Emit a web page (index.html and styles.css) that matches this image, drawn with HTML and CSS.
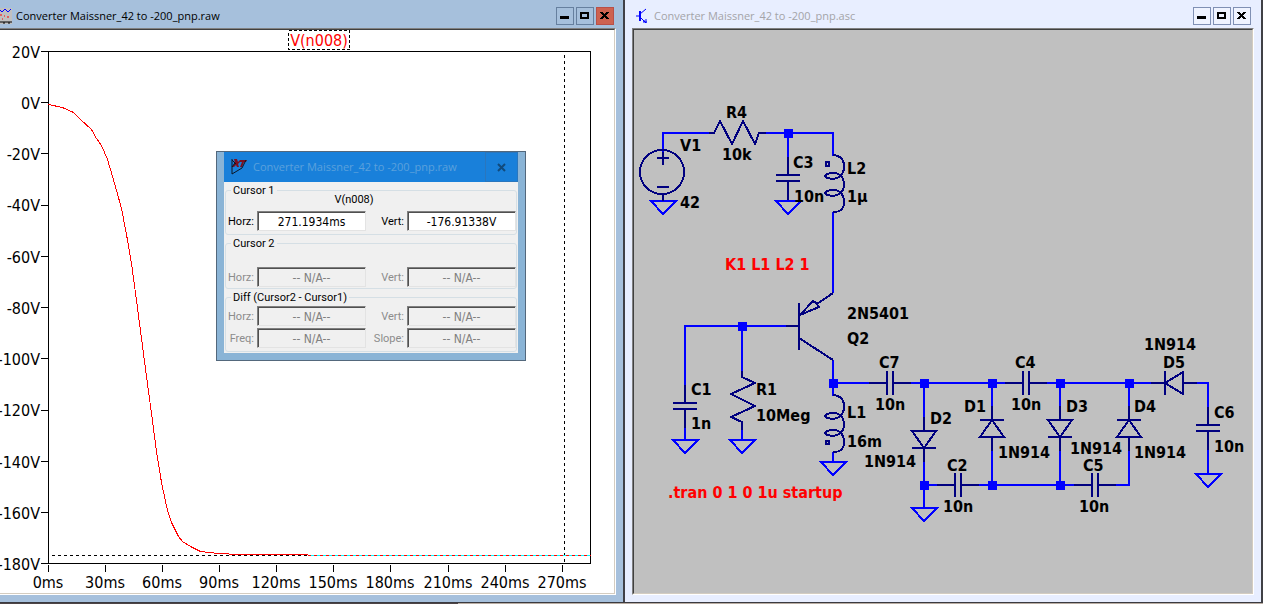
FILE: index.html
```html
<!DOCTYPE html>
<html lang="en">
<head>
<meta charset="utf-8">
<title>Converter Maissner_42 to -200_pnp</title>
<link rel="stylesheet" href="styles.css">
</head>
<body>
<main class="desktop">
  <section class="window window-plot">
    <header class="titlebar">
      <svg class="doc-icon" width="16" height="16" viewBox="0 0 16 16" aria-hidden="true">
        <rect width="16" height="16" fill="#c0c0c0"/>
        <path d="M0 4L3 1L6 4L9 1L12 4L15 1" fill="none" stroke="#00f"/>
        <path d="M1 9h1M4 7h2M8 8h1M11 9h2M6 11h1" stroke="#f00" stroke-width="1"/>
        <path d="M0 14h16M3 14v2M8 14v2M13 14v2" stroke="#000"/>
      </svg>
      <h1 class="title">Converter Maissner_42 to -200_pnp.raw</h1>
      <div class="buttons">
        <button class="win-btn" type="button" aria-label="Minimize"><svg width="16" height="16" viewBox="0 0 16 16"><path d="M3 8h9v3H3z"/></svg></button>
        <button class="win-btn" type="button" aria-label="Maximize"><svg width="16" height="16" viewBox="0 0 16 16"><path fill-rule="evenodd" d="M3 4h9v7H3zM5 6v3h5V6z"/></svg></button>
        <button class="win-btn win-btn-close" type="button" aria-label="Close"><svg width="16" height="16" viewBox="0 0 16 16"><path d="M3 4h3v1h1v1h1V5h1V4h3v1h-1v1h-1v1H9v1h1v1h1v1h1v1H9v-1H8V9H7v1H6v1H3v-1h1V9h1V8h1V7H5V6H4V5H3z"/></svg></button>
      </div>
    </header>
    <div class="client">
      <svg class="canvas plot" viewBox="0 30 614 563" preserveAspectRatio="xMinYMin meet">
        <g class="axis" transform="translate(.5 .5)">
          <rect x="48" y="51" width="542" height="512"/>
          <path d="M40 51h8M40 102h8M40 153h8M40 205h8M40 256h8M40 307h8M40 358h8M40 410h8M40 461h8M40 512h8M40 563h8M48 564v7M105 564v7M162 564v7M219 564v7M276 564v7M333 564v7M390 564v7M448 564v7M505 564v7M562 564v7"/>
        </g>
        <g class="ylabels">
          <text x="40" y="58">20V</text><text x="40" y="109">0V</text><text x="40" y="160">-20V</text>
          <text x="40" y="211">-40V</text><text x="40" y="263">-60V</text><text x="40" y="314">-80V</text>
          <text x="40" y="365">-100V</text><text x="40" y="416">-120V</text><text x="40" y="468">-140V</text>
          <text x="40" y="519">-160V</text><text x="40" y="570">-180V</text>
        </g>
        <g class="xlabels">
          <text x="48" y="588">0ms</text><text x="105" y="588">30ms</text><text x="162" y="588">60ms</text>
          <text x="219" y="588">90ms</text><text x="276" y="588">120ms</text><text x="333" y="588">150ms</text>
          <text x="390" y="588">180ms</text><text x="448" y="588">210ms</text><text x="505" y="588">240ms</text>
          <text x="562" y="588">270ms</text>
        </g>
        <g transform="translate(.5 .5)">
          <path class="cursor" d="M51 555H307M564 54V563"/>
          <path class="trace" d="M48 104L62 107L73 112L80 119L91 129L96 138L101 145L107 159L112 176L116 190L121 208L126 234L131 263L136 300L141 338L146 376L151 413L156 451L161 482L167 510L171 522L178 536L182 541L190 546L200 551L218 553L238 554H307"/>
          <path class="trace-alt" d="M307 555H590"/>
          <path class="trace trace-dash" d="M307 555H590"/>
          <rect class="legend-box" x="288" y="30" width="61" height="19"/>
        </g>
        <text class="trace-name" x="319" y="46">V(n008)</text>
      </svg>

      <div class="dialog" role="dialog" aria-label="Cursor values">
        <header class="dlg-bar">
          <svg class="dlg-icon" width="16" height="16" viewBox="0 0 16 16" aria-hidden="true">
            <path d="M3 0h3l1 3l2-2h7l-1 2h-2l-2 5h-2l2-5h-2l-2 2l1 3H6L5 6L3 8H1l3-4z" fill="#7d1020"/>
            <path d="M1 0V15L11 9L15 1M1 8L4 4M1 1L5 5" fill="none" stroke="#0c1624"/>
          </svg>
          <h2 class="dlg-title">Converter Maissner_42 to -200_pnp.raw</h2>
          <button class="dlg-close" type="button" aria-label="Close dialog"><svg width="9" height="9" viewBox="0 0 9 9"><path d="M1 1L8 8M8 1L1 8" stroke="#114a7c" stroke-width="2"/></svg></button>
        </header>
        <form class="dlg-body">
          <fieldset class="group">
            <legend>Cursor 1</legend>
            <div class="signal">V(n008)</div>
            <div class="fields">
              <label for="c1h">Horz:</label><input id="c1h" type="text" value="271.1934ms" readonly>
              <label for="c1v">Vert:</label><input id="c1v" type="text" value="-176.91338V" readonly>
            </div>
          </fieldset>
          <fieldset class="group group-second">
            <legend>Cursor 2</legend>
            <div class="fields">
              <label class="off" for="c2h">Horz:</label><input id="c2h" type="text" value="-- N/A--" disabled>
              <label class="off" for="c2v">Vert:</label><input id="c2v" type="text" value="-- N/A--" disabled>
            </div>
          </fieldset>
          <fieldset class="group group-diff">
            <legend>Diff (Cursor2 - Cursor1)</legend>
            <div class="fields">
              <label class="off" for="dh">Horz:</label><input id="dh" type="text" value="-- N/A--" disabled>
              <label class="off" for="dv">Vert:</label><input id="dv" type="text" value="-- N/A--" disabled>
              <label class="off" for="df">Freq:</label><input id="df" type="text" value="-- N/A--" disabled>
              <label class="off" for="ds">Slope:</label><input id="ds" type="text" value="-- N/A--" disabled>
            </div>
          </fieldset>
        </form>
      </div>
    </div>
  </section>

  <section class="window window-schematic">
    <header class="titlebar">
      <svg class="doc-icon" width="12" height="16" viewBox="0 0 12 16" aria-hidden="true">
        <path d="M0 8h4M4 6L10 1M4 9L10 15M10 11v4M7 14h4M8 12v2" fill="none" stroke="#00f"/><path d="M4 3v10" stroke="#00f" stroke-width="2"/>
      </svg>
      <h1 class="title">Converter Maissner_42 to -200_pnp.asc</h1>
      <div class="buttons">
        <button class="win-btn" type="button" aria-label="Minimize"><svg width="16" height="16" viewBox="0 0 16 16"><path d="M3 8h9v3H3z"/></svg></button>
        <button class="win-btn" type="button" aria-label="Maximize"><svg width="16" height="16" viewBox="0 0 16 16"><path fill-rule="evenodd" d="M3 4h9v7H3zM5 6v3h5V6z"/></svg></button>
        <button class="win-btn" type="button" aria-label="Close"><svg width="16" height="16" viewBox="0 0 16 16"><path d="M3 4h3v1h1v1h1V5h1V4h3v1h-1v1h-1v1H9v1h1v1h1v1h1v1H9v-1H8V9H7v1H6v1H3v-1h1V9h1V8h1V7H5V6H4V5H3z"/></svg></button>
      </div>
    </header>
    <div class="client">
      <svg class="canvas schematic" viewBox="634 30 618 563" preserveAspectRatio="xMinYMin meet">
        <defs>
          <path id="gnd" d="M-12 0H13L0 13Z"/>
          <path id="coil" d="M0 0C8 1 11 4 11 12C11 18 9 20 6 22C2 25 -6 24 -8 21C-5 17 3 17 7 20C10 22 11 25 11 30C11 34 9 37 6 39C2 42 -6 41 -8 38C-5 34 3 34 7 37C10 40 11 43 11 47C11 54 8 57 0 57"/>
          <path id="cap-v" d="M0 -18V0M-12 0H12M-12 6H12M0 6V25"/>
          <path id="cap-h" d="M-18 0H0M0 -12V12M6 -12V12M6 0H24"/>
          <path id="dio-down" d="M0 -14V0M-12 0H12L0 17ZM-12 17H12M0 17V31"/>
          <path id="dio-up" d="M0 -14V0M-12 0H12M0 0L12 17H-12ZM0 17V31"/>
          <rect id="node" x="-4" y="-4" width="9" height="9"/>
        </defs>
        <g class="wire">
          <path d="M663 153V133H712M764 133H833V156M788 133V158M833 212V293M788 326H685V386M742 326V373M685 426V440M742 427V440M833 360V396M833 452V462M833 383H870M911 383H1006M1046 383H1153M1196 383H1208V408M1208 450V474M924 383V418M924 461V508M992 383V407M992 450V485M1060 383V407M1060 450V485M1129 383V407M1129 450V485H1116M924 485H938M979 485H1074"/>
          <use href="#gnd" x="663" y="201"/><use href="#gnd" x="788" y="201"/>
          <use href="#gnd" x="685" y="440"/><use href="#gnd" x="742" y="440"/>
          <use href="#gnd" x="833" y="462"/><use href="#gnd" x="924" y="508"/><use href="#gnd" x="1208" y="474"/>
        </g>
        <g class="part">
          <circle cx="662" cy="172" r="22"/>
          <path d="M657 158H669M663 152V165M657 187H669M663 194V201"/>
          <path d="M709 133H714L720 121L732 144L743 121L755 144L759 133H766"/>
          <path d="M742 371V377L755 383L731 394L755 406L731 417L742 422V430"/>
          <path d="M786 326H799M799 303V350M799 338L833 360M817 304L833 293"/>
          <path d="M800 315L813 301L816 303L819 307Z"/>
          <rect x="826" y="162" width="3" height="4"/><rect x="826" y="441" width="3" height="3"/>
          <use href="#coil" x="833" y="155"/><use href="#coil" x="833" y="395"/>
          <use href="#cap-v" x="788" y="175"/><use href="#cap-v" x="685" y="403"/><use href="#cap-v" x="1208" y="425"/>
          <use href="#cap-h" x="887" y="383"/><use href="#cap-h" x="1023" y="383"/>
          <use href="#cap-h" x="955" y="485"/><use href="#cap-h" x="1092" y="485"/>
          <use href="#dio-down" x="924" y="431"/><use href="#dio-down" x="1060" y="420"/>
          <use href="#dio-up" x="992" y="420"/><use href="#dio-up" x="1129" y="420"/>
          <path d="M1151 383H1165M1165 371V395M1165 383L1183 372V394ZM1183 383H1197"/>
        </g>
        <g class="nodes">
          <use href="#node" x="788" y="133"/><use href="#node" x="742" y="326"/><use href="#node" x="833" y="383"/>
          <use href="#node" x="924" y="383"/><use href="#node" x="992" y="383"/><use href="#node" x="1060" y="383"/>
          <use href="#node" x="1129" y="383"/><use href="#node" x="924" y="485"/><use href="#node" x="992" y="485"/>
          <use href="#node" x="1060" y="485"/>
        </g>
        <g class="names">
          <text x="680" y="151">V1</text><text x="680" y="208">42</text>
          <text x="726" y="118">R4</text><text x="722" y="160">10k</text>
          <text x="793" y="168">C3</text><text x="794" y="202">10n</text>
          <text x="847" y="174">L2</text><text x="847" y="202">1µ</text>
          <text x="847" y="319">2N5401</text><text x="847" y="344">Q2</text>
          <text x="691" y="395">C1</text><text x="691" y="429">1n</text>
          <text x="756" y="395">R1</text><text x="756" y="421">10Meg</text>
          <text x="847" y="418">L1</text><text x="847" y="447">16m</text>
          <text x="879" y="368">C7</text><text x="875" y="410">10n</text>
          <text x="930" y="424">D2</text><text x="864" y="467">1N914</text>
          <text x="964" y="412">D1</text><text x="998" y="458">1N914</text>
          <text x="1015" y="368">C4</text><text x="1011" y="410">10n</text>
          <text x="947" y="471">C2</text><text x="943" y="512">10n</text>
          <text x="1066" y="412">D3</text><text x="1070" y="454">1N914</text>
          <text x="1083" y="471">C5</text><text x="1079" y="512">10n</text>
          <text x="1134" y="412">D4</text><text x="1134" y="458">1N914</text>
          <text x="1144" y="350">1N914</text><text x="1163" y="368">D5</text>
          <text x="1214" y="418">C6</text><text x="1214" y="452">10n</text>
          <text class="directive" x="725" y="270">K1 L1 L2 1</text>
          <text class="directive" x="668" y="498">.tran 0 1 0 1u startup</text>
        </g>
      </svg>
    </div>
  </section>
</main>
</body>
</html>
```
FILE: styles.css
```css
* { box-sizing: border-box; }

body {
  margin: 0;
  overflow: hidden;
  background: linear-gradient(90deg, #4d4446 0 458px, #b8aca2 458px);
  font-family: "Open Sans", "Noto Sans", sans-serif;
}

.desktop {
  display: grid;
  grid-template-columns: minmax(0, 625fr) minmax(0, 638fr);
  min-height: 100vh;
  padding-bottom: 1px;
}

/* Child windows */
.window {
  display: flex;
  flex-direction: column;
  min-width: 0;
  border-right: 2px solid #404046;
  border-bottom: 1px solid #3a3a40;
}

.window-plot {
  padding: 0 7px 7px 0;
  background: #a6c0dc;
}

.window-schematic {
  padding: 0 7px 7px;
  background: #e8eeff;
}

.titlebar {
  display: flex;
  align-items: center;
  gap: 4px;
  height: 28px;
  padding: 4px 2px 0 0;
}

.window-plot .doc-icon { margin-left: -4px; }
.window-schematic .titlebar { gap: 6px; padding-right: 3px; }
.window-schematic .doc-icon { margin-left: 4px; }

.title {
  flex: 1;
  margin: 0;
  font-size: 11px;
  font-weight: 400;
  line-height: 16px;
  white-space: nowrap;
  color: #000;
}

.window-schematic .title { color: #a4a4a8; }

.buttons { display: flex; gap: 2px; }

.win-btn {
  width: 18px;
  height: 18px;
  padding: 0;
  border: 1px solid #66809f;
  background: transparent;
}

.win-btn svg { display: block; shape-rendering: crispEdges; }
.win-btn-close { border-color: #b85048; background: #cd6250; }
.window-schematic .win-btn { border-color: #8090b4; background: #eff3ff; }

.client {
  position: relative;
  flex: 1;
  border-top: 1px solid #808080;
  border-right: 1px solid #fff;
  border-bottom: 1px solid #fff;
}

.window-schematic .client { border-left: 1px solid #808080; }

.canvas {
  display: block;
  width: 100%;
  height: 100%;
  border-top: 1px solid #404040;
  border-right: 1px solid #d4ccc0;
  border-bottom: 1px solid #d4ccc0;
}

/* Plot */
.plot {
  background: #fff;
  font: 16px "DejaVu Sans Condensed", "Noto Sans", sans-serif;
}

.plot path, .plot rect { fill: none; shape-rendering: crispEdges; }
.axis { stroke: #000; }
.ylabels { text-anchor: end; }
.xlabels, .trace-name { text-anchor: middle; }
.trace { stroke: #f00; }
.trace-alt { stroke: #0ff; }
.trace-dash { stroke-dasharray: 3 3; }
.cursor { stroke: #000; stroke-dasharray: 3 3; }
.legend-box { stroke: #000; stroke-dasharray: 3 2; }
.trace-name { fill: #f00; }

/* Schematic */
.schematic {
  border-left: 1px solid #404040;
  background: #c0c0c0;
  font: bold 16px "DejaVu Sans Condensed", "Noto Sans", sans-serif;
}

.wire, .part {
  fill: none;
  stroke-width: 2;
  shape-rendering: crispEdges;
}

.wire { stroke: #00f; }
.part { stroke: #000080; }
.nodes { fill: #00f; }
.directive { fill: #f00; }

/* Cursor dialog */
.dialog {
  position: absolute;
  top: 122px;
  left: 216px;
  width: 310px;
  padding: 0 7px 7px;
  border: 1px solid #53687c;
  background: #8ab4d6;
}

.dlg-bar {
  display: flex;
  align-items: center;
  gap: 6px;
  height: 30px;
  padding-left: 7px;
  background: #1980da;
}

.dlg-title {
  flex: 1;
  margin: 0;
  font-size: 11px;
  font-weight: 400;
  line-height: 16px;
  white-space: nowrap;
  color: #5ba0dc;
}

.dlg-close {
  width: 33px;
  height: 30px;
  padding: 0;
  border: 1px solid #2a76bd;
  background: #1980da;
}

.dlg-body {
  display: grid;
  gap: 2px;
  padding: 2px 1px 1px;
  background: #f0f0f0;
  font: 11px/13px Roboto, "Liberation Sans", sans-serif;
}

.group {
  min-width: 0;
  margin: 0;
  padding: 0 0 3px;
  border: 1px solid #d5dfe5;
  border-radius: 3px;
}

.group legend {
  height: 13px;
  margin-left: 5px;
  padding: 0 2px;
}

.signal { margin: -4px 0 5px; padding-right: 34px; text-align: center; }

.fields {
  display: grid;
  grid-template-columns: 28px 1fr 35px 1fr;
  gap: 2px 3px;
  align-items: center;
}

.fields label { text-align: right; white-space: nowrap; }
.fields .off { color: #8c8c8c; }

.fields input {
  width: 100%;
  min-width: 0;
  height: 20px;
  padding: 1px 0 0;
  border: 1px solid;
  border-color: #808080 #e3e3e3 #e3e3e3 #808080;
  box-shadow: inset 1px 1px #505050;
  background: #fff;
  color: #000;
  font: 12px "DejaVu Sans Condensed", "Noto Sans", sans-serif;
  text-align: center;
}

.fields input:disabled { background: #f0f0f0; color: #808080; }
.group-second { padding-bottom: 1px; }
.group-second .fields { margin-top: 17px; }
.group-diff .fields { margin-top: 2px; }
```
